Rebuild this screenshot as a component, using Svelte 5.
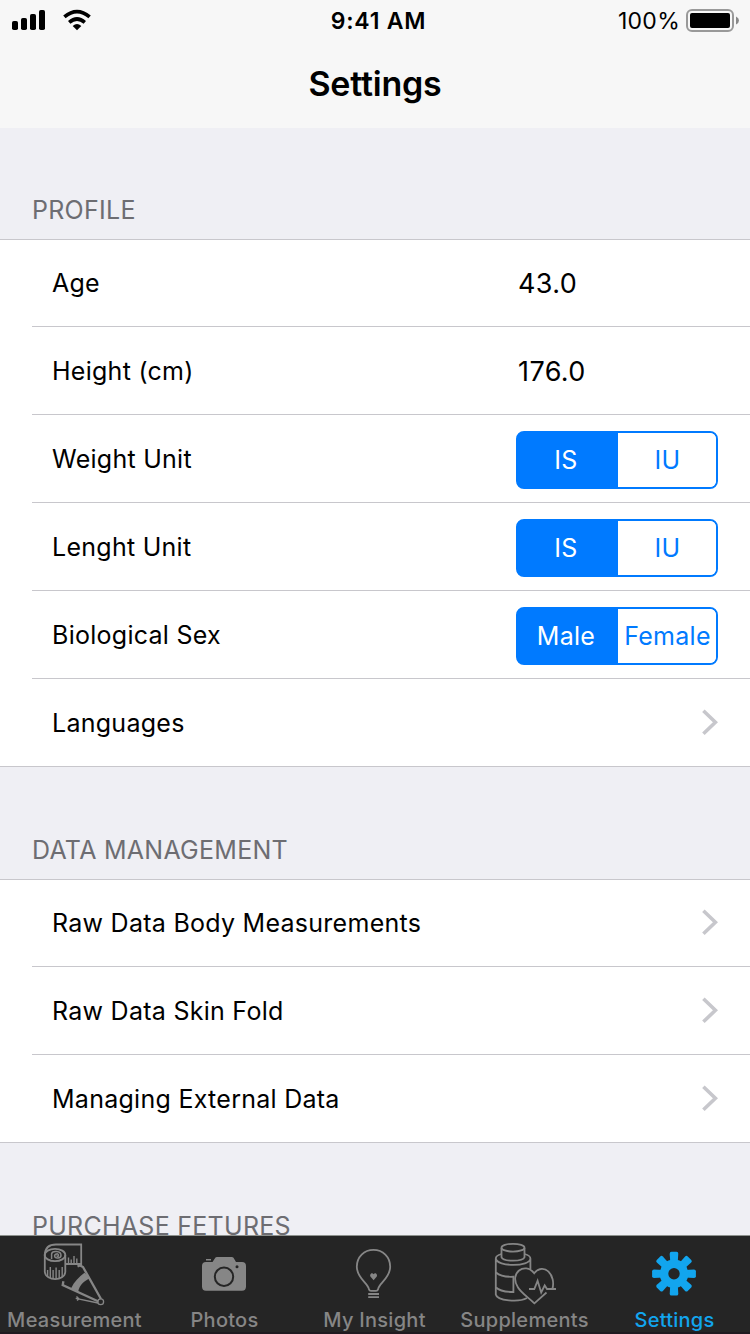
<script>
  const groups = [
    {
      title: 'PROFILE',
      rows: [
        { label: 'Age', value: '43.0' },
        { label: 'Height (cm)', value: '176.0' },
        { label: 'Weight Unit', options: ['IS', 'IU'] },
        { label: 'Lenght Unit', options: ['IS', 'IU'] },
        { label: 'Biological Sex', options: ['Male', 'Female'] },
        { label: 'Languages' }
      ]
    },
    {
      title: 'DATA MANAGEMENT',
      rows: [
        { label: 'Raw Data Body Measurements' },
        { label: 'Raw Data Skin Fold' },
        { label: 'Managing External Data' }
      ]
    },
    { title: 'PURCHASE FETURES', rows: [] }
  ];
  const tabs = ['Measurement', 'Photos', 'My Insight', 'Supplements', 'Settings'];
  const teeth = [0, 45, 90, 135, 180, 225, 270, 315];
</script>

<div class="screen">
  <header>
    <div class="status">
      <svg class="signal" width="100" height="40" viewBox="0 0 100 40">
        <rect x="12" y="21" width="6" height="9" rx="1.8" />
        <rect x="21" y="18" width="6" height="12" rx="1.8" />
        <rect x="30" y="14" width="6" height="16" rx="1.8" />
        <rect x="39" y="10" width="6" height="20" rx="1.8" />
        <g fill="none" stroke="#000" stroke-width="3.7">
          <path d="M64.4 16.9Q77 6.4 89.6 16.9" />
          <path d="M69.2 22.3Q77 15.7 84.8 22.3" />
        </g>
        <path d="M72.7 25.9Q77 22.3 81.3 25.9L77 30.2Z" />
      </svg>
      <span class="time">9:41 AM</span>
      <div class="power">
        <span>100%</span>
        <svg width="54" height="24" viewBox="0 0 54 24">
          <rect x="1" y="2" width="46" height="21" rx="5" fill="none" stroke="#999" stroke-width="2" />
          <rect x="4" y="5" width="40" height="15" rx="2" />
          <path d="M50 8.5Q53 9.8 53 12.5T50 16.5Z" fill="#888" />
        </svg>
      </div>
    </div>
    <h1>Settings</h1>
  </header>

  <main>
    {#each groups as group}
      <section>
        <h2>{group.title}</h2>
        {#if group.rows.length}
          <div class="list">
            {#each group.rows as row}
              <div class="row">
                <span class="label">{row.label}</span>
                {#if row.value}
                  <span class="value">{row.value}</span>
                {:else if row.options}
                  <div class="segments">
                    <span class="on">{row.options[0]}</span>
                    <span>{row.options[1]}</span>
                  </div>
                {:else}
                  <svg class="chevron" width="18" height="28" viewBox="0 0 18 28">
                    <path d="M3.4 1.8L15.4 13.3L3.4 24.8" />
                  </svg>
                {/if}
              </div>
            {/each}
          </div>
        {/if}
      </section>
    {/each}
  </main>

  <nav>
    {#each tabs as tab, i}
      <div class="tab" class:active={i === 4}>
        <svg width="150" height="70" viewBox="0 0 150 70">
          {#if i === 0}
            <g class="line">
              <path d="M44.8 19C45 12 49 8.5 56 8.5H81.2V28H66" />
              <ellipse cx="55" cy="19" rx="10.3" ry="6.2" />
              <path d="M44.8 19V36C46 45.5 64.5 45.5 65.3 36V19" />
              <path d="M51.6 23V17.8C52 14.4 61 14.4 61 19.2C61 22.5 55 23 54.6 20C54.5 17.5 59 17 58.4 19.6C58 20.6 56.8 20.5 56.8 19.5" stroke-width="1.5" />
              <path d="M47.6 41V34M50.3 42V31M53.1 43V34M56.1 43V31.5M59.2 42V34M62.2 41V31M68.5 28V21.5M71.2 28V23.5M74 28V20M76.8 28V22.5" stroke-width="1.4" />
              <path class="arm" d="M77.5 30.5L80 29.4L83 31L101 63" />
              <path class="arm" d="M63.4 45.3L62.7 49L98.5 65.5" />
              <path d="M75.7 62.4L98 67M76.5 60.5L79 63L77 64.5" stroke-width="1.4" />
              <circle cx="100.7" cy="65.7" r="2.9" stroke-width="1.3" />
            </g>
            <path d="M84.5 36.8L90 42.2C84.5 44.5 79.5 49 78.2 55.5L71 52.5C74 46 79 41 84.5 36.8Z" />
          {:else if i === 1}
            <path d="M56 24.5V23H61V24.5ZM52 30Q52 26 56 26H62.5L65.3 21.8Q65.7 21 67 21H81.5Q83 21 83.5 21.8L86 26H92Q96 26 96 30V50.5Q96 54.7 92 54.7H56Q52 54.7 52 50.5Z" />
            <circle cx="74" cy="40.7" r="9.2" fill="none" stroke="#252525" stroke-width="2" />
            <circle cx="87" cy="30.7" r="1.5" fill="#252525" />
          {:else if i === 2}
            <g class="line">
              <path d="M69 53.5C68.2 47 56.8 42.5 56.8 30.7C56.8 20.8 64.2 13.8 73.5 13.8S90.2 20.8 90.2 30.7C90.2 42.5 78.8 47 78 53.5Q77.6 54.8 76 54.8H71Q69.4 54.8 69 53.5Z" />
              <path d="M68.2 58H79M68.2 61.2H79" />
            </g>
            <path d="M73.6 44.2L70.6 40.8C69 38.5 72 35.7 73.6 38.2C75.2 35.7 78.2 38.5 76.6 40.8Z" />
          {:else if i === 3}
            <g class="line">
              <ellipse cx="63" cy="11.7" rx="11.5" ry="3.9" />
              <path d="M51.5 12V21.2C53 25.8 73 25.8 74.5 21.2V12" />
              <path d="M51.5 18C47.5 19 45.8 20.5 45.8 22.5V58.5C47 65 69 66.5 77 62M45.8 22.5C47 31 80 31 80.4 22.5V33M74.5 18C78.5 19 80.4 20.5 80.4 22.5" />
              <path d="M46 36.5C50 40 58 41 63.4 40.7V56C56 56 49 54.5 46 51.5" />
              <path d="M102.3 53.2C106.5 39.5 94 25.5 84.2 37.2C75 25.5 58.5 37 68 51.5C71 56.5 77 60.5 84.4 67.3L96.5 56.5" />
              <path d="M79 53H84.3L87.6 44.8L91.2 56.5L94.7 49.4L97 53H106" />
            </g>
          {:else}
            {#each teeth as angle}
              <path d="M70.3 27L69.7 17.7Q69.7 15.8 71.5 15.8H76.5Q78.3 15.8 78.3 17.7L77.7 27Z" transform={`rotate(${angle} 74 37.7)`} />
            {/each}
            <circle cx="74" cy="37.7" r="10" fill="none" stroke="currentColor" stroke-width="8.6" />
          {/if}
        </svg>
        <span>{tab}</span>
      </div>
    {/each}
  </nav>
</div>

<style>
  :global(body) {
    overflow: hidden;
  }
  .screen {
    width: 750px;
    height: 1334px;
    display: flex;
    flex-direction: column;
    overflow: hidden;
    background: #efeff4;
    color: #000;
    font-family: Inter, 'Liberation Sans', sans-serif;
    font-size: 25px;
    letter-spacing: 0.27px;
  }
  header {
    flex: 0 0 128px;
    height: 128px;
    min-height: 0;
    background: #f7f7f7;
  }
  .status {
    height: 40px;
    display: grid;
    grid-template-columns: 1fr auto 1fr;
    grid-template-rows: 40px;
    align-items: center;
    font-size: 23px;
    line-height: 38px;
  }
  .time {
    font-weight: 600;
    letter-spacing: 0.8px;
    padding: 2px 0 0 7px;
  }
  .power {
    display: flex;
    justify-content: flex-end;
    align-items: center;
    gap: 6px;
    padding-right: 10px;
  }
  .power span {
    padding-top: 2px;
  }
  h1 {
    margin: 0;
    font-size: 34px;
    line-height: 88px;
    font-weight: 600;
    text-align: center;
    letter-spacing: -0.2px;
  }
  main {
    flex: 1;
    min-height: 0;
    overflow: hidden;
  }
  h2 {
    margin: 0;
    height: 112px;
    box-sizing: border-box;
    padding: 67px 0 0 32px;
    font-size: 25px;
    font-weight: 400;
    line-height: 32px;
    color: #6d6d72;
  }
  section:first-child h2 {
    height: 111px;
    padding-top: 66px;
  }
  .list {
    background: #fff;
    border-top: 1px solid #c8c7cc;
    border-bottom: 1px solid #c8c7cc;
  }
  .row {
    height: 88px;
    box-sizing: border-box;
    margin-left: 32px;
    padding: 0 32px 0 20px;
    display: flex;
    align-items: center;
    justify-content: space-between;
    border-bottom: 1px solid #c8c7cc;
  }
  .row:first-child {
    height: 87px;
  }
  .row:last-child {
    height: 87px;
    border-bottom: 0;
  }
  .value {
    width: 200px;
    padding-top: 1px;
    font-size: 27px;
    letter-spacing: 0.4px;
  }
  .segments {
    width: 202px;
    height: 58px;
    box-sizing: border-box;
    border: 2px solid #007aff;
    border-radius: 8px;
    display: grid;
    grid-template-columns: 100px 98px;
    overflow: hidden;
    color: #007aff;
    background: linear-gradient(90deg, #007aff 50px, #fff 50px) border-box;
    line-height: 55px;
    text-align: center;
    margin-top: 3px;
    letter-spacing: 0.3px;
  }
  .segments span {
    padding-left: 1px;
    background: #fff;
  }
  .segments .on {
    padding: 0 4px 0 0;
    color: #fff;
    background: #007aff;
  }
  .chevron {
    fill: none;
    stroke: #c7c7cc;
    stroke-width: 3.6;
  }
  nav {
    flex: 0 0 99px;
    height: 99px;
    min-height: 0;
    box-sizing: border-box;
    border-top: 1px solid #8d918d;
    border-bottom: 2px solid #201a20;
    background: #252525;
    display: grid;
    grid-template-columns: repeat(5, 150px);
    grid-template-rows: 96px;
    color: #868686;
  }
  .tab {
    display: flex;
    flex-direction: column;
    align-items: center;
    font-size: 20px;
    line-height: 28px;
    letter-spacing: 0.27px;
    font-weight: 500;
    white-space: nowrap;
  }
  .tab svg {
    flex: none;
    fill: currentColor;
  }
  .tab span {
    margin-left: -1px;
  }
  .tab .line {
    fill: none;
    stroke: currentColor;
    stroke-width: 1.8;
  }
  .arm {
    stroke-width: 2.3;
  }
  .active {
    color: #12a5ee;
  }
</style>
